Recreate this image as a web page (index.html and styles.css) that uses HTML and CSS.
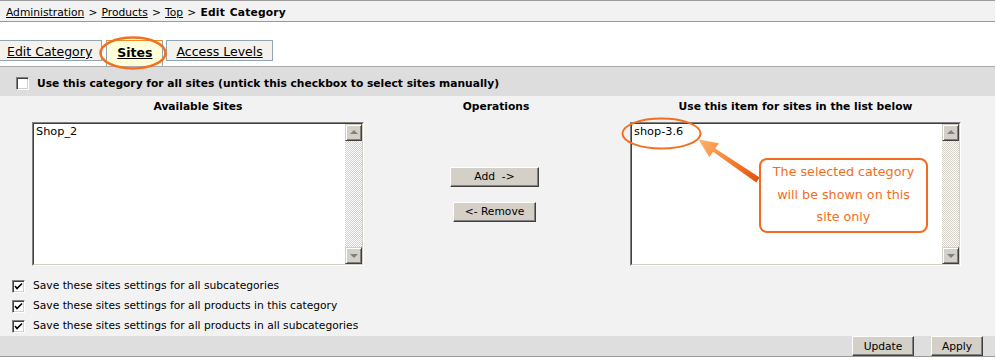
FILE: index.html
```html
<!DOCTYPE html>
<html>
<head>
<meta charset="utf-8">
<title>Edit Category - Sites</title>
<link rel="stylesheet" href="styles.css">
</head>
<body>
<div class="page">
  <div class="crumbs"><a href="#">Administration</a> &gt; <a href="#">Products</a> &gt; <a href="#">Top</a> &gt; <b>Edit Category</b></div>

  <div class="tabs">
    <a class="tab first" href="#">Edit Category</a>
    <a class="tab active" href="#">Sites</a>
    <a class="tab last" href="#">Access Levels</a>
  </div>

  <div class="allbar">
    <span class="cb"></span>
    <span class="alltext">Use this category for all sites (untick this checkbox to select sites manually)</span>
  </div>

  <div class="main">
    <div class="cols">
      <div class="col">
        <div class="colhead">Available Sites</div>
        <div class="listbox wide">
          <div class="lb-inner">
            <div class="items"><div class="item">Shop_2</div></div>
            <div class="sbar">
              <span class="sbtn"><i class="tri up"></i></span>
              <span class="track"></span>
              <span class="sbtn"><i class="tri down"></i></span>
            </div>
          </div>
        </div>
      </div>
      <div class="col">
        <div class="colhead">Operations</div>
        <div class="opbtns">
          <button class="btn add">Add&nbsp;&nbsp;-&gt;</button>
          <button class="btn remove">&lt;- Remove</button>
        </div>
      </div>
      <div class="col">
        <div class="colhead">Use this item for sites in the list below</div>
        <div class="listbox">
          <div class="lb-inner">
            <div class="items"><div class="item">shop-3.6</div></div>
            <div class="sbar">
              <span class="sbtn"><i class="tri up"></i></span>
              <span class="track"></span>
              <span class="sbtn"><i class="tri down"></i></span>
            </div>
          </div>
        </div>
      </div>
    </div>

    <div class="checks">
      <div class="chk"><span class="cb checked"><svg width="9" height="9" viewBox="0 0 9 9"><path d="M1 4 L3 6.5 L8 1.5" fill="none" stroke="#000" stroke-width="1.6"/></svg></span><span>Save these sites settings for all subcategories</span></div>
      <div class="chk"><span class="cb checked"><svg width="9" height="9" viewBox="0 0 9 9"><path d="M1 4 L3 6.5 L8 1.5" fill="none" stroke="#000" stroke-width="1.6"/></svg></span><span>Save these sites settings for all products in this category</span></div>
      <div class="chk"><span class="cb checked"><svg width="9" height="9" viewBox="0 0 9 9"><path d="M1 4 L3 6.5 L8 1.5" fill="none" stroke="#000" stroke-width="1.6"/></svg></span><span>Save these sites settings for all products in all subcategories</span></div>
    </div>
  </div>

  <div class="footer">
    <button class="btn update">Update</button>
    <button class="btn apply">Apply</button>
  </div>

  <svg class="marks" width="996" height="360" viewBox="0 0 996 360">
    <defs>
      <linearGradient id="arrowgrad" gradientUnits="userSpaceOnUse" x1="700" y1="140" x2="758" y2="180">
        <stop offset="0" stop-color="#ffb06a"/>
        <stop offset="0.45" stop-color="#f7883a"/>
        <stop offset="1" stop-color="#e4520a"/>
      </linearGradient>
    </defs>
    <ellipse cx="133" cy="53" rx="32.5" ry="15.5" fill="none" stroke="#f37021" stroke-width="2.5"/>
    <ellipse cx="661.5" cy="133.5" rx="39" ry="15" fill="none" stroke="#f37021" stroke-width="2"/>
    <polygon points="698.5,139.5 719,143.2 715.3,148.5 759.7,177.5 756.3,182.5 713.1,151.8 709.4,157.2" fill="url(#arrowgrad)"/>
  </svg>

  <div class="callout">The selected category<br>will be shown on this<br>site only</div>
</div>
</body>
</html>
```

FILE: styles.css
```css
html, body {
  margin: 0;
  padding: 0;
  background: #fff;
}

.page {
  position: relative;
  width: 995px;
  height: 360px;
  font-family: "DejaVu Sans", Verdana, sans-serif;
  font-size: 10.7px;
  color: #000;
  overflow: hidden;
}

/* breadcrumb bar */
.crumbs {
  box-sizing: content-box;
  width: 990px;
  height: 17px;
  padding: 3px 0 0 6px;
  line-height: 17px;
  word-spacing: 0.8px;
  background: #f2f2f2;
  border-top: 1px solid #9a9a9a;
  border-bottom: 1px solid #9a9a9a;
}
.crumbs a {
  color: #000;
  text-decoration: underline;
}
.crumbs b {
  letter-spacing: 0.2px;
}

/* tabs */
.tabs {
  display: flex;
  align-items: flex-start;
  box-sizing: content-box;
  height: 26px;
  padding-top: 18px;
  border-bottom: 1px solid #a9a9a9;
}
.tab {
  display: block;
  font-size: 12.5px;
  line-height: 15px;
  padding: 3px 9px 1px;
  color: #000;
  text-decoration: underline;
  background: #f4f2ec;
  border: 1px solid #8fa4b4;
}
.tab.first {
  margin-left: -3px;
}
.tab.active {
  margin-left: 4px;
  padding: 4px 10px 0;
  height: 21px;
  border-bottom: none;
  border-top-color: #f08a2c;
  background: #ffffd9;
  font-weight: bold;
}
.tab.last {
  margin-left: 3px;
}

/* "use for all sites" bar */
.allbar {
  display: flex;
  align-items: flex-start;
  gap: 8px;
  height: 29px;
  box-sizing: border-box;
  padding: 10px 0 0 16px;
  background: #dddddd;
}
.alltext {
  font-weight: bold;
  line-height: 16px;
  margin-top: -1px;
}

/* checkbox */
.cb {
  display: inline-flex;
  align-items: center;
  justify-content: center;
  width: 13px;
  height: 13px;
  box-sizing: border-box;
  flex: none;
  background: #fff;
  border: 1px solid;
  border-color: #808080 #ffffff #ffffff #808080;
  box-shadow: inset 1px 1px #404040, inset -1px -1px #d4d0c8;
}
.cb svg {
  display: block;
}

/* main area */
.main {
  background: #f2f2f2;
  height: 240px;
  padding-top: 3px;
  box-sizing: border-box;
}
.cols {
  display: grid;
  grid-template-columns: 396px 200px 399px;
}
.col {
  display: flex;
  flex-direction: column;
  align-items: center;
}
.colhead {
  font-weight: bold;
  line-height: 16px;
  margin-bottom: 7px;
}

.listbox {
  width: 331px;
  height: 144px;
  box-sizing: border-box;
  border: 1px solid;
  border-color: #808080 #ffffff #ffffff #808080;
}
.listbox.wide {
  width: 332px;
}
.lb-inner {
  display: flex;
  height: 100%;
  box-sizing: border-box;
  border: 1px solid;
  border-color: #404040 #d4d0c8 #d4d0c8 #404040;
  background: #fff;
}
.items {
  flex: 1;
  padding: 1px 2px;
  font-size: 11.3px;
  line-height: 14px;
}
.sbar {
  width: 17px;
  display: flex;
  flex-direction: column;
}
.sbtn {
  display: flex;
  align-items: center;
  justify-content: center;
  width: 17px;
  height: 17px;
  box-sizing: border-box;
  background: #d4d0c8;
  border: 1px solid;
  border-color: #d4d0c8 #404040 #404040 #d4d0c8;
  box-shadow: inset 1px 1px #fff, inset -1px -1px #808080;
}
.tri {
  display: block;
  width: 0;
  height: 0;
  border-left: 4px solid transparent;
  border-right: 4px solid transparent;
}
.tri.up {
  border-bottom: 4px solid #808080;
  margin-top: -1px;
}
.tri.down {
  border-top: 4px solid #808080;
}
.track {
  flex: 1;
  background-color: #fff;
  background-image: conic-gradient(#d4d0c8 25%, #fff 0 50%, #d4d0c8 0 75%, #fff 0);
  background-size: 2px 2px;
}

/* operation buttons */
.opbtns {
  height: 144px;
  display: flex;
  flex-direction: column;
  align-items: center;
  justify-content: center;
  gap: 15px;
  margin-left: -3px;
}
.btn {
  display: block;
  height: 20px;
  padding: 0;
  margin: 0;
  font-family: "DejaVu Sans", Verdana, sans-serif;
  font-size: 10.7px;
  color: #000;
  background: #d4d0c8;
  border: 1px solid;
  border-color: #ffffff #404040 #404040 #ffffff;
  box-shadow: inset -1px -1px #808080;
  box-sizing: border-box;
}
.btn.add { width: 89px; }
.btn.remove { width: 83px; }
.btn.update { width: 62px; }
.btn.apply { width: 52px; }

/* bottom checkboxes */
.checks {
  margin-top: 10px;
  padding-left: 12px;
}
.chk {
  display: flex;
  align-items: center;
  gap: 8px;
  height: 20px;
  line-height: 20px;
}
.cb.checked {
  background: #fff;
}

/* footer */
.footer {
  display: flex;
  justify-content: flex-end;
  gap: 17px;
  height: 20px;
  padding-right: 12px;
  background: #dedede;
  border-bottom: 1px solid #9a9a9a;
}

/* annotations */
.marks {
  position: absolute;
  left: 0;
  top: 0;
  pointer-events: none;
}
.callout {
  position: absolute;
  left: 759px;
  top: 158px;
  width: 169px;
  height: 75px;
  box-sizing: border-box;
  padding-top: 1px;
  border: 2px solid #f26b1f;
  border-radius: 8px;
  background: #fff;
  color: #f26c22;
  font-size: 12.7px;
  line-height: 22.5px;
  text-align: center;
}
```
